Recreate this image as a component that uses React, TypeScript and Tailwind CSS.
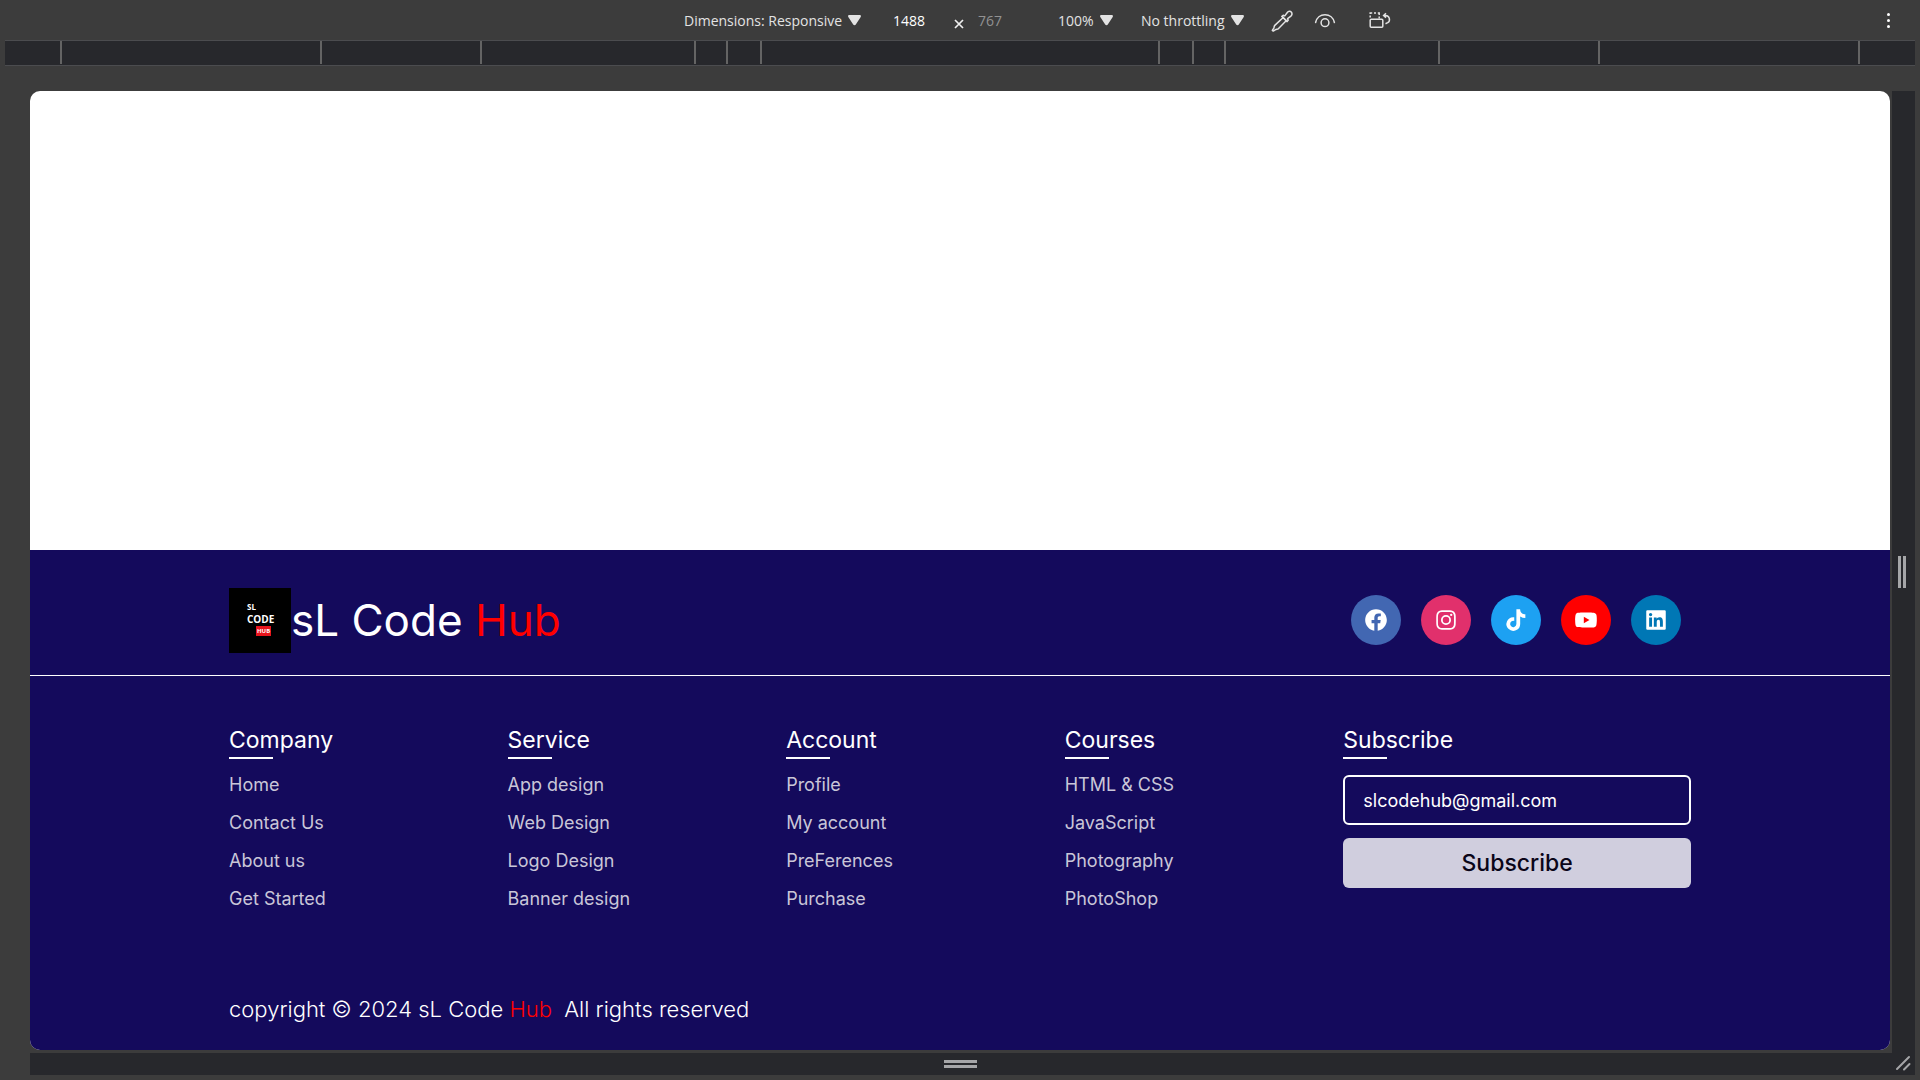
import type { ReactNode } from "react";
import {
  BiLogoFacebookCircle,
  BiLogoInstagram,
  BiLogoTiktok,
  BiLogoYoutube,
  BiLogoLinkedinSquare,
} from "react-icons/bi";

const columns = [
  { title: "Company", links: ["Home", "Contact Us", "About us", "Get Started"] },
  { title: "Service", links: ["App design", "Web Design", "Logo Design", "Banner design"] },
  { title: "Account", links: ["Profile", "My account", "PreFerences", "Purchase"] },
  { title: "Courses", links: ["HTML & CSS", "JavaScript", "Photography", "PhotoShop"] },
];

const socials = [
  { name: "Facebook", Icon: BiLogoFacebookCircle, color: "bg-[#4267b2]" },
  { name: "Instagram", Icon: BiLogoInstagram, color: "bg-[#e1306c]" },
  { name: "TikTok", Icon: BiLogoTiktok, color: "bg-[#1da1f2]" },
  { name: "YouTube", Icon: BiLogoYoutube, color: "bg-[#ff0000]" },
  { name: "LinkedIn", Icon: BiLogoLinkedinSquare, color: "bg-[#0077b5]" },
];

// Widths of the ruler's segments, left half; the right half mirrors them.
const rulerLeft = [57, 260, 160, 214, 32, 34];
const rulerRight = [34, 32, 214, 160, 260, 57];

function ToolbarSelect({ label, value, width }: { label: string; value: string; width: string }) {
  return (
    <div className={`flex items-center gap-[6px] ${width}`}>
      <select aria-label={label} className="field-sizing-content appearance-none bg-transparent outline-none">
        <option>{value}</option>
      </select>
      <svg viewBox="0 0 13 11" className="h-[11px] w-[13px] shrink-0" fill="#e3e3e3" aria-hidden="true">
        <path d="M1.3 0h10.4c1 0 1.6 1 1 1.9L7.8 9.6c-.6 1-2 1-2.6 0L.3 1.9C-.3 1 .3 0 1.3 0z" />
      </svg>
    </div>
  );
}

function Toolbar() {
  return (
    <header className="flex h-10 shrink-0 items-center pr-[22px] font-['Open_Sans','Noto_Sans',sans-serif] text-sm text-[#e3e3e3]">
      <div className="flex flex-1 items-center justify-center pt-px pl-[197px]">
        <ToolbarSelect label="Device" value="Dimensions: Responsive" width="w-[209px]" />
        <input aria-label="Width" defaultValue="1488" className="w-[61px] bg-transparent text-white outline-none" />
        <svg viewBox="0 0 10 10" className="mt-[6px] mr-[14px] size-[10px] shrink-0" stroke="#f0f0f0" strokeWidth="1.7" aria-hidden="true">
          <path d="M1 1l8 8M9 1L1 9" />
        </svg>
        <input aria-label="Height" defaultValue="767" className="w-[80px] bg-transparent text-[#929292] outline-none" />
        <ToolbarSelect label="Zoom" value="100%" width="w-[83px]" />
        <ToolbarSelect label="Throttling" value="No throttling" width="w-[130px]" />
        <button aria-label="Eyedropper">
          <svg viewBox="0 0 22 22" className="size-[22px]" fill="none" stroke="#e3e3e3" strokeWidth="1.5" strokeLinejoin="round" strokeLinecap="round">
            <path d="M11 6.5l5 5M12.2 7.5L3.8 15.4c-.8.8-.5 1.5-1 2.7l-1.5 2.2 1 .8L4.6 19.7c1-.5 1.9-.2 2.7-1l8.1-8.2" />
            <path d="M11 6.3l1.2-1 1.6.6 2.5-3.4c1.1-1.4 3-1.5 4-.4 1.1 1.1.9 2.9-.4 4l-3.3 2.6.6 1.6-1.2 1.2z" />
          </svg>
        </button>
        <button aria-label="Vision deficiency" className="ml-[21px]">
          <svg viewBox="0 0 22 22" className="size-[22px]" fill="none" stroke="#e3e3e3" strokeWidth="1.5" strokeLinecap="round">
            <path d="M1.6 12.5C2.6 7.8 6.4 4.7 11 4.7s8.4 3.1 9.4 7.8" />
            <circle cx="11" cy="12.7" r="3.9" />
          </svg>
        </button>
        <button aria-label="Rotate" className="ml-[33px]">
          <svg viewBox="0 0 22 22" className="size-[22px]" fill="none" stroke="#e3e3e3" strokeWidth="1.5">
            <rect x="1.2" y="9.3" width="12.6" height="8" rx="1" />
            <path d="M1.2 7.5V5.5M1.2 3.9V3h2M5 3h2M8.8 3h1.4v2M10.2 6.6v2" />
            <path d="M14.5 5.4h2.200a4 4 0 0 1 2 7.300l-2.200 1M17 3.200l-2.400 2.200L17 7.600" />
          </svg>
        </button>
      </div>
      <button aria-label="More options" className="flex w-5 flex-col items-center gap-[3px]">
        <span className="size-[3px] rounded-full bg-white" />
        <span className="size-[3px] rounded-full bg-white" />
        <span className="size-[3px] rounded-full bg-white" />
      </button>
    </header>
  );
}

function Ruler() {
  return (
    <div className="mx-[5px] flex h-[26px] shrink-0 justify-between border-y border-[#4b4c4f] bg-[#27282c] pb-px">
      <div className="flex">
        {rulerLeft.map((w, i) => (
          <div key={i} className="border-r-2 border-[#646464]" style={{ width: w }} />
        ))}
      </div>
      <div className="flex">
        {rulerRight.map((w, i) => (
          <div key={i} className="border-l-2 border-[#646464]" style={{ width: w }} />
        ))}
      </div>
    </div>
  );
}

function ColumnTitle({ children }: { children: ReactNode }) {
  return (
    <h2 className="text-[23px] leading-[34px] text-white">
      {children}
      <span className="block h-[2px] w-11 bg-white" />
    </h2>
  );
}

function Logo() {
  return (
    <div className="flex h-[65px] w-[62px] shrink-0 flex-col items-start bg-black pt-[14px] pl-[18px] font-['Liberation_Sans_Narrow','Open_Sans','Liberation_Sans',sans-serif] font-bold text-white">
      <span className="text-[8px] leading-[10px]">SL</span>
      <span className="text-[10px] leading-[14px]">CODE</span>
      <span className="ml-[9px] bg-[#e8141c] px-px text-[6px] leading-[10px]">HUB</span>
    </div>
  );
}

function Footer() {
  return (
    <footer className="shrink-0 bg-[#140a5c] font-['Inter','Open_Sans',sans-serif] text-white">
      <div className="border-b border-white px-8">
        <div className="mx-auto flex h-[125px] max-w-[1462px] items-center justify-between pt-[15px]">
          <div className="flex items-center">
            <Logo />
            <h1 className="text-[44px] leading-[65px] whitespace-pre">
              sL Code <span className="text-[#ff0000]">Hub</span>
            </h1>
          </div>
          <nav aria-label="Social media" className="flex gap-5 pr-[10px]">
            {socials.map(({ name, Icon, color }) => (
              <a key={name} href="#" aria-label={name} className={`flex size-[50px] items-center justify-center rounded-full ${color}`}>
                <Icon className="size-[26px]" />
              </a>
            ))}
          </nav>
        </div>
      </div>
      <div className="px-8">
        <div className="mx-auto grid max-w-[1462px] grid-cols-[repeat(4,minmax(0,278fr))_minmax(0,347fr)] pt-[47px]">
          {columns.map((col) => (
            <section key={col.title}>
              <ColumnTitle>{col.title}</ColumnTitle>
              <ul className="mt-3 flex flex-col gap-[10px]">
                {col.links.map((link) => (
                  <li key={link} className="h-7 text-lg leading-7">
                    <a href="#" className="text-[#c9c6d8]">{link}</a>
                  </li>
                ))}
              </ul>
            </section>
          ))}
          <form onSubmit={(e) => e.preventDefault()}>
            <ColumnTitle>Subscribe</ColumnTitle>
            <input
              type="email"
              aria-label="Email"
              defaultValue="slcodehub@gmail.com"
              className="mt-4 block h-[50px] w-full rounded-md border-2 border-white bg-transparent px-[18px] text-lg text-white outline-none"
            />
            <button type="submit" className="mt-[13px] block h-[50px] w-full rounded-md bg-[#d0cede] text-[23px] font-medium text-[#0a0518]">
              Subscribe
            </button>
          </form>
        </div>
        <p className="mx-auto mt-[79px] max-w-[1462px] pb-6 text-[22px] leading-[34px] font-light whitespace-pre">
          copyright © 2024 sL Code <span className="text-[#ff0000]">Hub</span>{"  "}All rights reserved
        </p>
      </div>
    </footer>
  );
}

export default function App() {
  return (
    <div className="flex min-h-screen flex-col bg-[#3c3c3c] pb-[5px]">
      <Toolbar />
      <Ruler />
      <div className="mt-[25px] mr-[5px] ml-[30px] grid flex-1 grid-cols-[minmax(0,1fr)_23px] grid-rows-[1fr_22px] gap-x-[2px] gap-y-[3px]">
        <main className="flex flex-col overflow-hidden rounded-[10px] bg-white">
          <div className="flex-1" />
          <Footer />
        </main>
        <div className="row-span-2 flex flex-col items-center bg-[#27282c]">
          <div className="flex flex-1 items-center gap-[2px] pr-[3px] pb-[3px]">
            <span className="h-8 w-[3px] bg-[#a5a6a8]" />
            <span className="h-8 w-[3px] bg-[#a5a6a8]" />
          </div>
          <svg viewBox="0 0 16 16" className="mr-[2px] mb-1 size-4" stroke="#a5a6a8" strokeWidth="2" strokeLinecap="round" aria-hidden="true">
            <path d="M2 14L14 2M9 14.500l5.500-5.500" />
          </svg>
        </div>
        <div className="-mr-[2px] flex flex-col items-center justify-center gap-[2px] bg-[#27282c] pr-[2px] pb-px">
          <span className="h-[3px] w-[33px] bg-[#a5a6a8]" />
          <span className="h-[3px] w-[33px] bg-[#a5a6a8]" />
        </div>
      </div>
    </div>
  );
}
